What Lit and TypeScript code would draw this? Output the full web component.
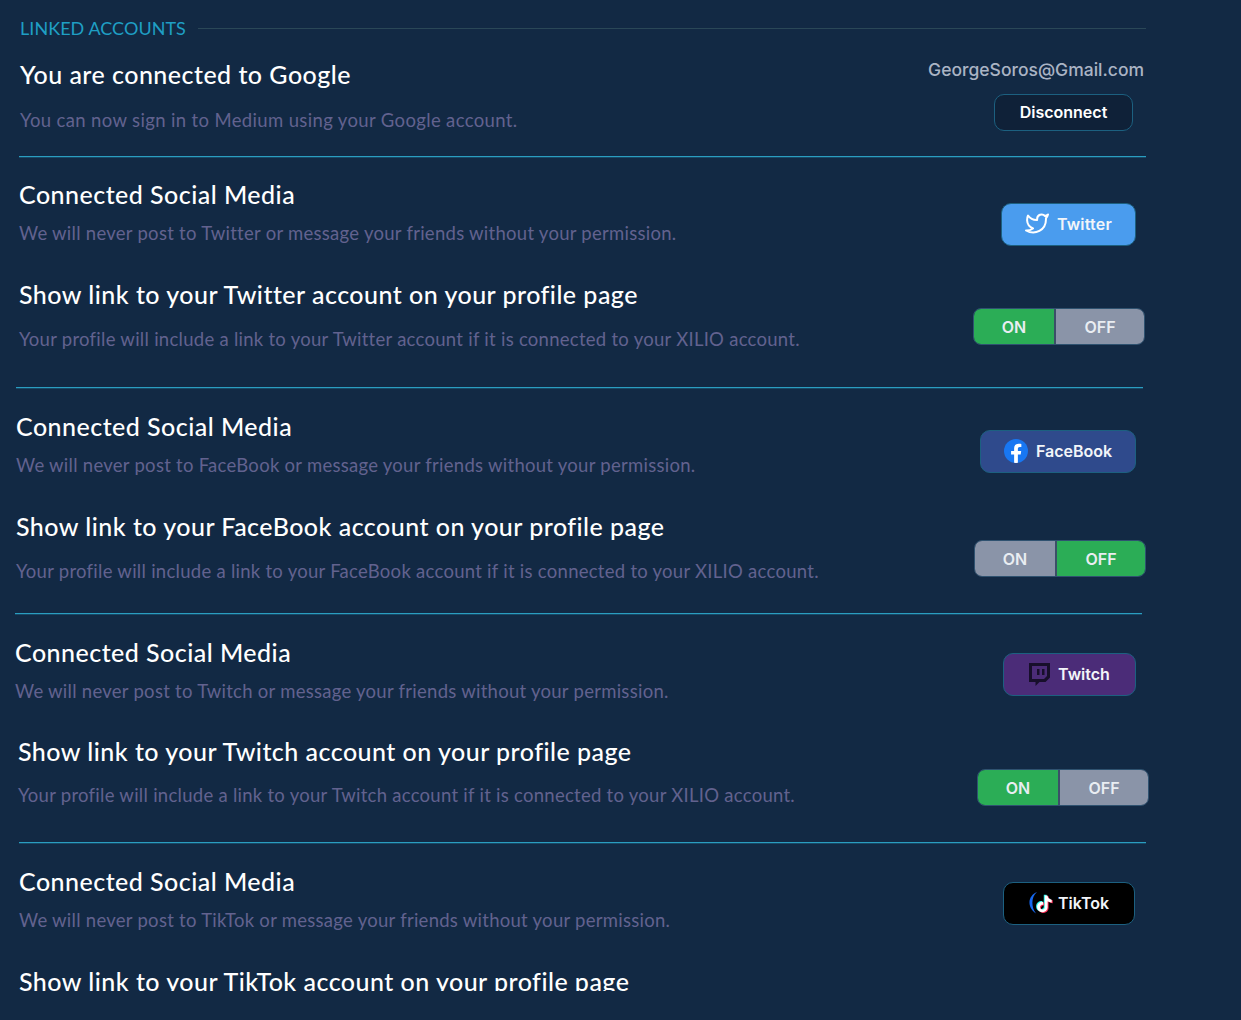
import { LitElement, html, css, svg } from "lit";
import { customElement } from "lit/decorators.js";
import { styleMap } from "lit/directives/style-map.js";

const NOTE =
  "M12.525.02c1.31-.02 2.61-.01 3.91-.02.08 1.53.63 3.09 1.75 4.17 1.12 1.11 2.7 1.62 4.24 1.79v4.03c-1.44-.05-2.89-.35-4.2-.97-.57-.26-1.1-.59-1.62-.93-.01 2.92.01 5.84-.02 8.75-.08 1.4-.54 2.79-1.35 3.94-1.31 1.92-3.58 3.17-5.91 3.21-1.43.08-2.86-.31-4.08-1.03-2.02-1.19-3.44-3.37-3.65-5.71-.02-.5-.03-1-.01-1.49.18-1.9 1.12-3.72 2.58-4.96 1.66-1.44 3.98-2.13 6.15-1.72.02 1.48-.04 2.96-.04 4.44-.99-.32-2.15-.23-3.02.37-.63.41-1.11 1.04-1.36 1.75-.21.51-.15 1.07-.14 1.61.24 1.64 1.82 3.02 3.5 2.87 1.12-.01 2.19-.66 2.77-1.61.19-.33.4-.67.41-1.06.1-1.79.06-3.57.07-5.36.01-4.03-.01-8.05.02-12.07z";

const icons: Record<string, unknown> = {
  twitter: html`<svg width="24" height="22" viewBox="0 0 24 22" fill="none" stroke="#fff" stroke-width="2" stroke-linejoin="round" stroke-linecap="round">
    <path d="M23 1.5a10.9 10.9 0 0 1-3 1.53 4.48 4.48 0 0 0-7.86 3v1A10.66 10.66 0 0 1 3 2.5s-4 9 5 13a11.64 11.64 0 0 1-7 2c9 5 20 0 20-11.5a4.5 4.5 0 0 0-.08-.83A7.72 7.72 0 0 0 23 1.5z" />
  </svg>`,
  facebook: html`<svg width="24" height="24" viewBox="0 0 24 24">
    <circle cx="12" cy="12" r="12" fill="#1877f2" />
    <path fill="#fff" d="M16.671 15.469 17.203 12h-3.328V9.75c0-.949.465-1.874 1.956-1.874h1.513V4.923s-1.374-.234-2.686-.234c-2.741 0-4.533 1.662-4.533 4.669V12H7.078v3.469h3.047v8.385a12.09 12.09 0 0 0 3.75 0v-8.385z" />
  </svg>`,
  twitch: html`<svg width="21" height="23" viewBox="0 0 21 23">
    <path fill="#170f2b" d="M0 0H21V14.5L16.5 19H10.5L6.5 23V19H0Z" />
    <path fill="#4b2c78" d="M3 3H18V13L15 16H3Z" />
    <path fill="#170f2b" d="M8 6H10.5V12H8ZM13 6H15.5V12H13Z" />
  </svg>`,
  tiktok: html`<svg width="26" height="24" viewBox="0 0 26 24">
    <path d="M10 1C2 4 -1.5 15 9 22.5C4 16 4 6 10 1Z" fill="#1668f0" />
    ${svg`<g transform="translate(9 4.5) scale(.7)">
      <path fill="#25f4ee" transform="translate(-1.4 -1)" d=${NOTE} />
      <path fill="#fe2c55" transform="translate(1.4 1)" d=${NOTE} />
      <path fill="#fff" d=${NOTE} />
    </g>`}
  </svg>`,
};

interface Row {
  title: string;
  sub?: string;
  left: number;
  gap?: number; // heading to sub text
  height: number;
  before?: number; // space from divider
  actionTop: number;
  actionRight: number;
  brand?: string;
  label?: string;
  on?: boolean;
  width?: number;
}

type Item = Row | { divider: true; left: number; width: number };

const connected = (name: string) =>
  `We will never post to ${name} or message your friends without your permission.`;
const profile = (name: string) =>
  `Your profile will include a link to your ${name} account if it is connected to your XILIO account.`;
const showLink = (name: string) => `Show link to your ${name} account on your profile page`;

const items: Item[] = [
  { divider: true, left: 19, width: 1127 },
  { title: "Connected Social Media", sub: connected("Twitter"), left: 19, gap: 12, before: 23, height: 100, actionTop: 23, actionRight: 105, brand: "twitter", label: "Twitter", width: 135 },
  { title: showLink("Twitter"), sub: profile("Twitter"), left: 19, gap: 18, height: 107, actionTop: 28, actionRight: 96, on: true },
  { divider: true, left: 16, width: 1127 },
  { title: "Connected Social Media", sub: connected("FaceBook"), left: 16, gap: 12, before: 24, height: 100, actionTop: 18, actionRight: 105, brand: "facebook", label: "FaceBook", width: 156 },
  { title: showLink("FaceBook"), sub: profile("FaceBook"), left: 16, gap: 18, height: 101, actionTop: 28, actionRight: 95, on: false },
  { divider: true, left: 15, width: 1127 },
  { title: "Connected Social Media", sub: connected("Twitch"), left: 15, gap: 12, before: 24, height: 99, actionTop: 15, actionRight: 105, brand: "twitch", label: "Twitch", width: 133 },
  { title: showLink("Twitch"), sub: profile("Twitch"), left: 18, gap: 17, height: 105, actionTop: 32, actionRight: 92, on: true },
  { divider: true, left: 19, width: 1127 },
  { title: "Connected Social Media", sub: connected("TikTok"), left: 19, gap: 12, before: 24, height: 100, actionTop: 15, actionRight: 106, brand: "tiktok", label: "TikTok", width: 132 },
  { title: showLink("TikTok"), left: 19, height: 24, actionTop: 0, actionRight: 0 },
];

@customElement("app-root")
export class AppRoot extends LitElement {
  static styles = css`
    :host {
      display: block;
      height: 1020px;
      background: #122944;
      overflow: hidden;
      font-family: "Lato", "Liberation Sans", sans-serif;
    }
    .head {
      display: flex;
      align-items: center;
      height: 55px;
      margin: 0 95px 5px 20px;
      gap: 12px;
      color: #1f9fc4;
      font-size: 18px;
      letter-spacing: 0.05px;
      white-space: nowrap;
    }
    .head i {
      flex: 1;
      align-self: flex-start;
      height: 1px;
      margin-top: 28px;
      background: #2a4757;
    }
    .row {
      display: flex;
      justify-content: space-between;
      overflow: hidden;
    }
    .google {
      height: 96px;
      padding-left: 20px;
    }
    .google p {
      margin-top: 19px;
      letter-spacing: 0.36px;
    }
    h2 {
      margin: 0;
      padding-bottom: 2px;
      font-size: 25px;
      font-weight: 500;
      line-height: 28px;
      letter-spacing: 0.47px;
      color: #fff;
      white-space: nowrap;
    }
    p {
      margin: 0;
      font-size: 18.5px;
      line-height: 22px;
      letter-spacing: 0.27px;
      color: #62628f;
      white-space: nowrap;
    }
    .divider {
      height: 1px;
      background: #2a9dc0;
      box-shadow: 0 1px 0 rgba(37, 150, 184, 0.3);
    }
    .account {
      display: flex;
      flex-direction: column;
      align-items: flex-end;
      gap: 14px;
      margin-right: 97px;
    }
    .email {
      font: 500 17.5px/20px "Inter", sans-serif;
      color: #aab4c4;
    }
    .btn {
      display: flex;
      align-items: center;
      justify-content: center;
      gap: 8px;
      box-sizing: border-box;
      height: 43px;
      padding-bottom: 1px;
      border: 1.5px solid #1c6080;
      border-radius: 10px;
      font: 600 16px "Inter", sans-serif;
      color: #f2f5f9;
    }
    .btn svg {
      flex: none;
    }
    .disconnect {
      width: 139px;
      height: 37px;
      margin-right: 11px;
      background: #0f2138;
      color: #fff;
    }
    .twitter {
      background: #4a9cee;
      letter-spacing: 0.2px;
    }
    .facebook {
      background: #2f4a8c;
    }
    .twitch {
      background: #4b2c78;
    }
    .tiktok {
      background: #000;
      gap: 5px;
      padding-right: 2px;
    }
    .toggle {
      display: flex;
      box-sizing: border-box;
      width: 172px;
      height: 37px;
      border: 1.5px solid #2f5270;
      border-radius: 8px;
      overflow: hidden;
      font: 600 16px "Inter", sans-serif;
      color: #e9edf2;
    }
    .toggle span {
      display: flex;
      align-items: center;
      justify-content: center;
      flex: none;
      width: 80px;
      background: #8a94a8;
    }
    .toggle span + span {
      flex: 1;
      border-left: 2px solid #3c4f68;
    }
    .toggle .active {
      background: #2bad56;
    }
  `;

  renderRow(r: Row) {
    const rowStyle = {
      height: `${r.height}px`,
      marginTop: `${r.before ?? 0}px`,
      paddingLeft: `${r.left}px`,
    };
    const actionStyle = { marginTop: `${r.actionTop}px`, marginRight: `${r.actionRight}px` };
    return html`<div class="row" style=${styleMap(rowStyle)}>
      <div>
        <h2>${r.title}</h2>
        ${r.sub ? html`<p style=${styleMap({ marginTop: `${r.gap}px` })}>${r.sub}</p>` : ""}
      </div>
      ${r.brand
        ? html`<div class="btn ${r.brand}" style=${styleMap({ ...actionStyle, width: `${r.width}px` })}>
            ${icons[r.brand]}${r.label}
          </div>`
        : r.on !== undefined
          ? html`<div class="toggle" style=${styleMap(actionStyle)}>
              <span class=${r.on ? "active" : ""}>ON</span>
              <span class=${r.on ? "" : "active"}>OFF</span>
            </div>`
          : ""}
    </div>`;
  }

  render() {
    return html`
      <div class="head">LINKED ACCOUNTS<i></i></div>
      <div class="row google">
        <div>
          <h2>You are connected to Google</h2>
          <p>You can now sign in to Medium using your Google account.</p>
        </div>
        <div class="account">
          <div class="email">GeorgeSoros@Gmail.com</div>
          <div class="btn disconnect">Disconnect</div>
        </div>
      </div>
      ${items.map((it) =>
        "divider" in it
          ? html`<div class="divider" style=${styleMap({ marginLeft: `${it.left}px`, width: `${it.width}px` })}></div>`
          : this.renderRow(it),
      )}
    `;
  }
}
